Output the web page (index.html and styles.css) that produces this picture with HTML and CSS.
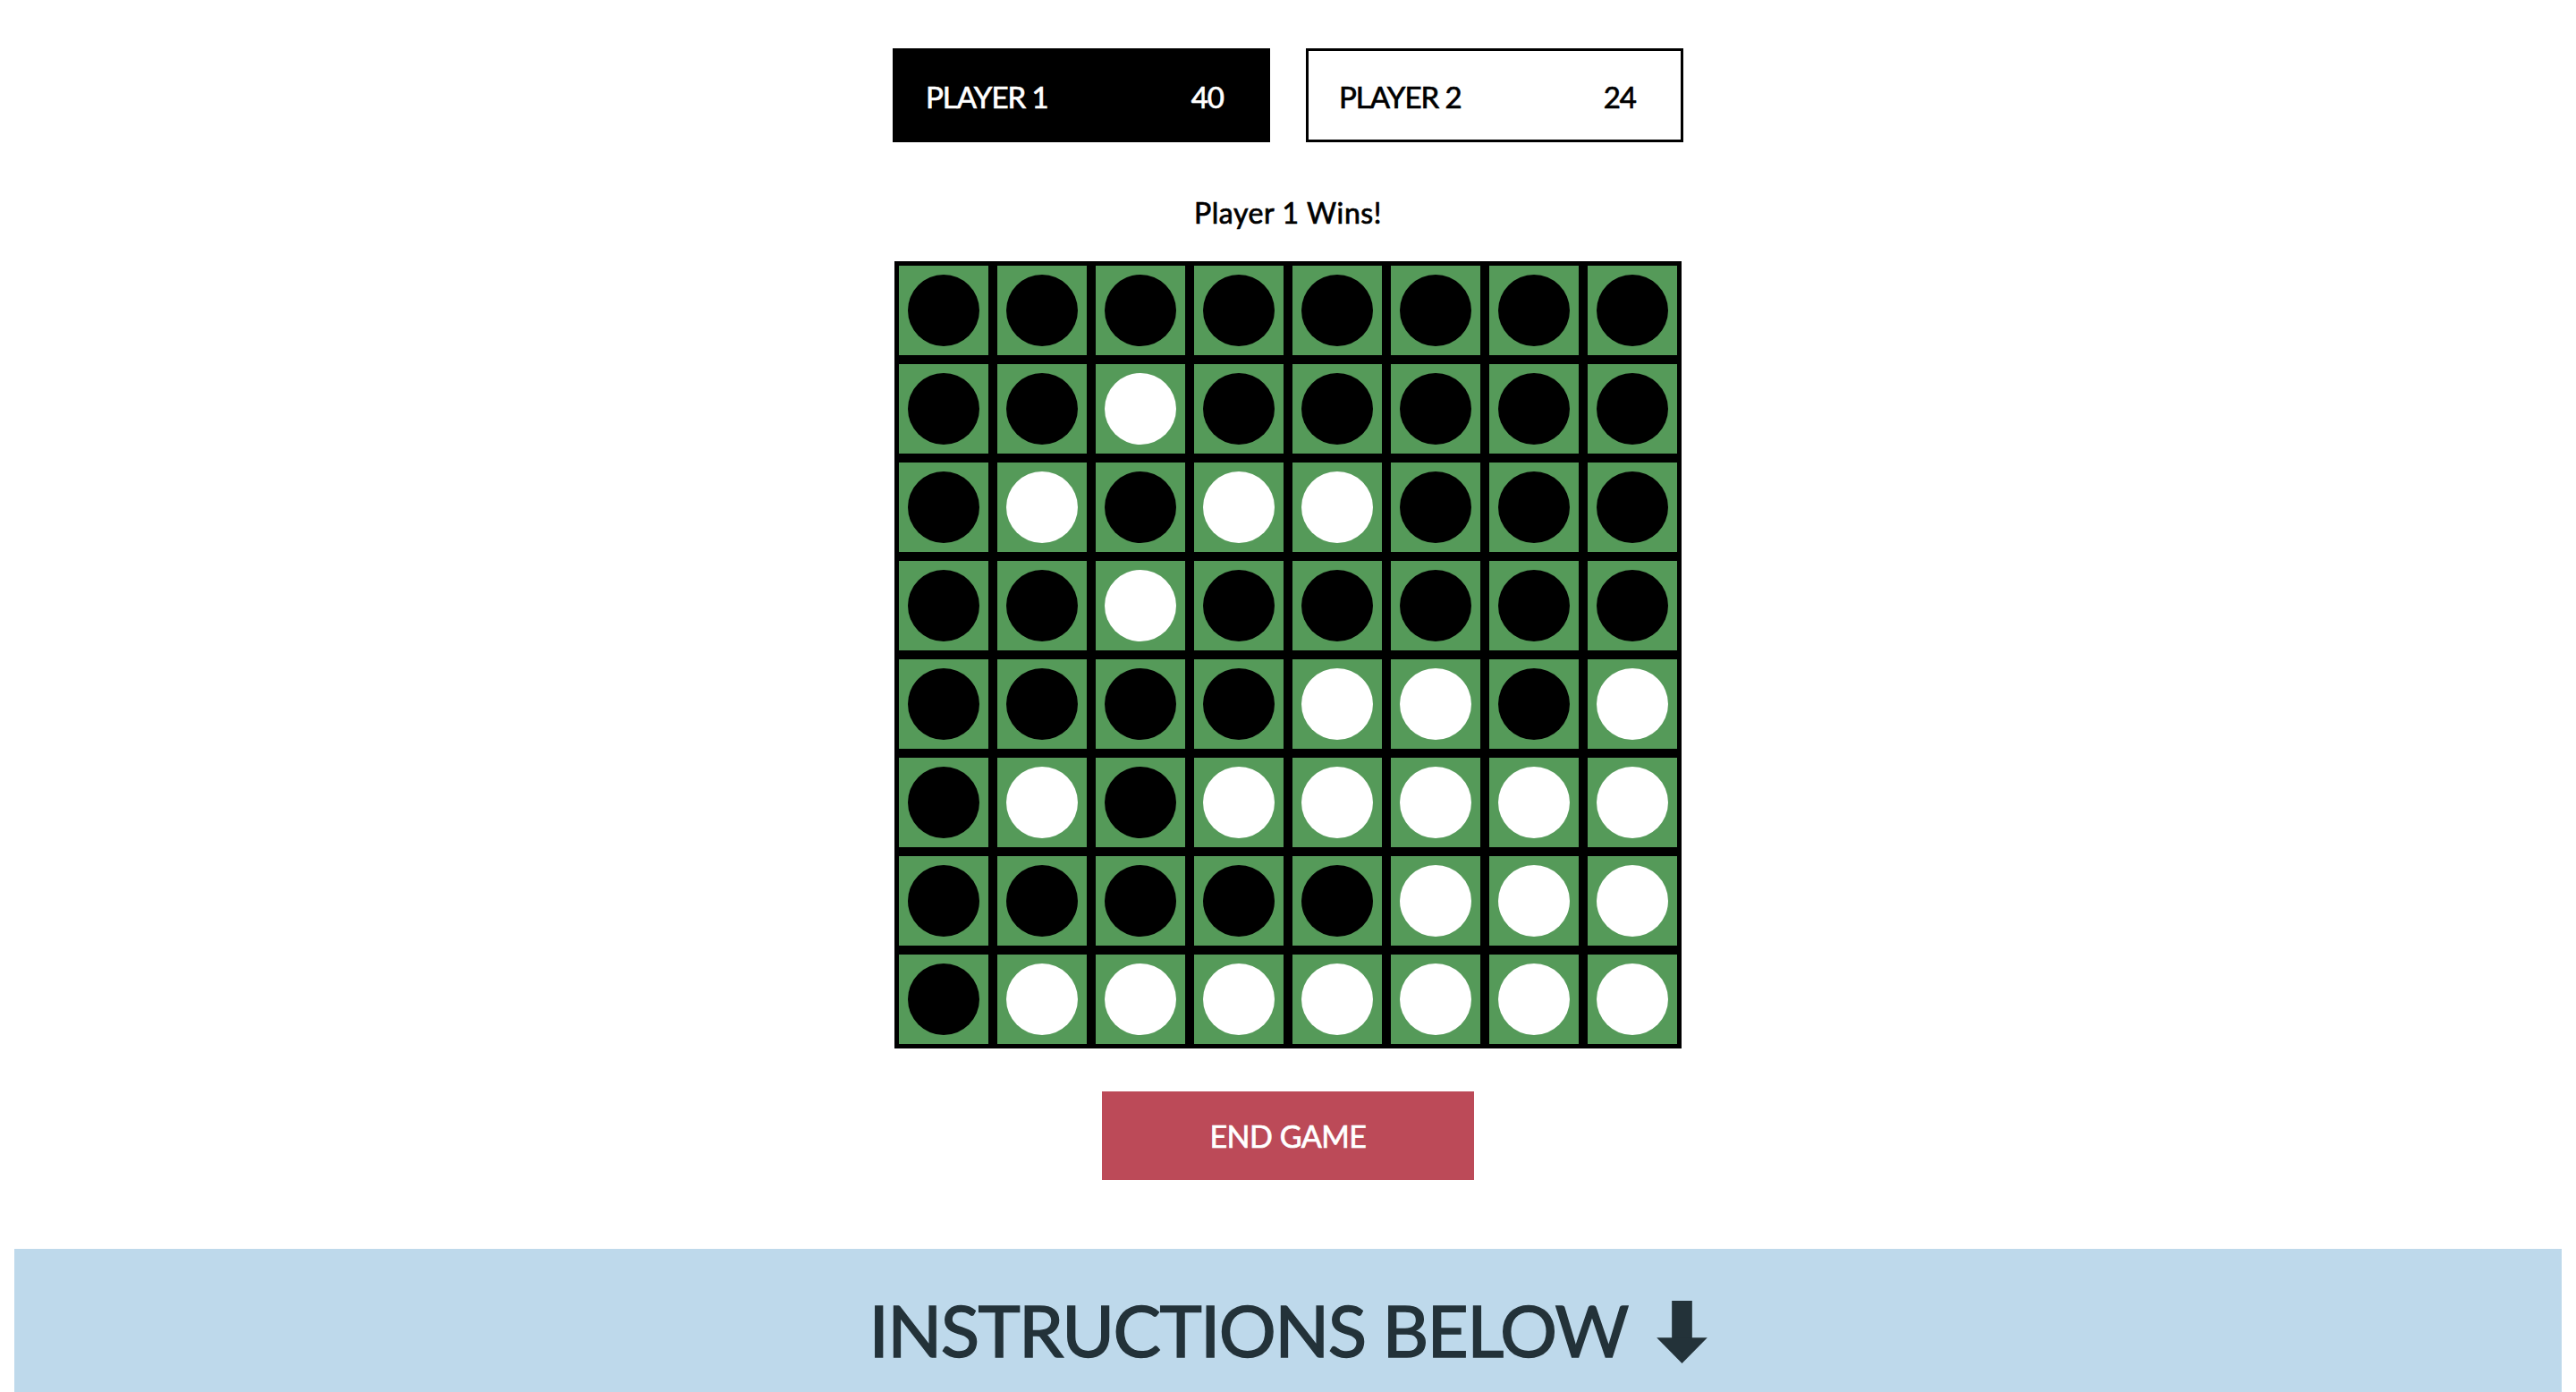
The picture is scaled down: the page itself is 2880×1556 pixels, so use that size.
FILE: index.html
```html
<!DOCTYPE html>
<html lang="en">
<head>
<meta charset="utf-8">
<title>Othello</title>
<link rel="stylesheet" href="styles.css">
</head>
<body>
<main class="game">
  <div class="scores">
    <div class="score active"><span>PLAYER 1</span><span>40</span></div>
    <div class="score idle"><span>PLAYER 2</span><span>24</span></div>
  </div>
  <p class="status">Player 1 Wins!</p>
  <div class="board">
    <div class="cell"><span class="disc black"></span></div><div class="cell"><span class="disc black"></span></div><div class="cell"><span class="disc black"></span></div><div class="cell"><span class="disc black"></span></div><div class="cell"><span class="disc black"></span></div><div class="cell"><span class="disc black"></span></div><div class="cell"><span class="disc black"></span></div><div class="cell"><span class="disc black"></span></div>
    <div class="cell"><span class="disc black"></span></div><div class="cell"><span class="disc black"></span></div><div class="cell"><span class="disc white"></span></div><div class="cell"><span class="disc black"></span></div><div class="cell"><span class="disc black"></span></div><div class="cell"><span class="disc black"></span></div><div class="cell"><span class="disc black"></span></div><div class="cell"><span class="disc black"></span></div>
    <div class="cell"><span class="disc black"></span></div><div class="cell"><span class="disc white"></span></div><div class="cell"><span class="disc black"></span></div><div class="cell"><span class="disc white"></span></div><div class="cell"><span class="disc white"></span></div><div class="cell"><span class="disc black"></span></div><div class="cell"><span class="disc black"></span></div><div class="cell"><span class="disc black"></span></div>
    <div class="cell"><span class="disc black"></span></div><div class="cell"><span class="disc black"></span></div><div class="cell"><span class="disc white"></span></div><div class="cell"><span class="disc black"></span></div><div class="cell"><span class="disc black"></span></div><div class="cell"><span class="disc black"></span></div><div class="cell"><span class="disc black"></span></div><div class="cell"><span class="disc black"></span></div>
    <div class="cell"><span class="disc black"></span></div><div class="cell"><span class="disc black"></span></div><div class="cell"><span class="disc black"></span></div><div class="cell"><span class="disc black"></span></div><div class="cell"><span class="disc white"></span></div><div class="cell"><span class="disc white"></span></div><div class="cell"><span class="disc black"></span></div><div class="cell"><span class="disc white"></span></div>
    <div class="cell"><span class="disc black"></span></div><div class="cell"><span class="disc white"></span></div><div class="cell"><span class="disc black"></span></div><div class="cell"><span class="disc white"></span></div><div class="cell"><span class="disc white"></span></div><div class="cell"><span class="disc white"></span></div><div class="cell"><span class="disc white"></span></div><div class="cell"><span class="disc white"></span></div>
    <div class="cell"><span class="disc black"></span></div><div class="cell"><span class="disc black"></span></div><div class="cell"><span class="disc black"></span></div><div class="cell"><span class="disc black"></span></div><div class="cell"><span class="disc black"></span></div><div class="cell"><span class="disc white"></span></div><div class="cell"><span class="disc white"></span></div><div class="cell"><span class="disc white"></span></div>
    <div class="cell"><span class="disc black"></span></div><div class="cell"><span class="disc white"></span></div><div class="cell"><span class="disc white"></span></div><div class="cell"><span class="disc white"></span></div><div class="cell"><span class="disc white"></span></div><div class="cell"><span class="disc white"></span></div><div class="cell"><span class="disc white"></span></div><div class="cell"><span class="disc white"></span></div>
  </div>
  <button class="end-btn" type="button">END GAME</button>
</main>
<section class="instructions">
  <h2 class="instructions-title">INSTRUCTIONS BELOW <svg class="arrow" viewBox="0 0 55 68" width="57" height="70" aria-hidden="true"><rect x="16.5" y="0" width="22" height="42" fill="currentColor"/><polygon points="0,40 55,40 27.5,68" fill="currentColor"/></svg></h2>
</section>
</body>
</html>
```
FILE: styles.css
```css
html, body {
  margin: 0;
  padding: 0;
  background: #ffffff;
}

body {
  font-family: Lato, "Open Sans", "Liberation Sans", sans-serif;
  color: #000;
}

.game {
  display: flex;
  flex-direction: column;
  align-items: center;
  padding-top: 54px;
}

.scores {
  display: flex;
  gap: 40px;
}

.score {
  box-sizing: border-box;
  width: 422px;
  height: 105px;
  display: flex;
  align-items: center;
  justify-content: space-between;
  padding: 3px 52px 0 37px;
  font-size: 33px;
  line-height: 1;
  letter-spacing: -1px;
  -webkit-text-stroke: 0.7px currentColor;
}

.score.active {
  background: #000;
  color: #fff;
}

.score.idle {
  border: 3px solid #000;
  padding: 3px 50px 0 34px;
}

.status {
  margin: 59px 0 34px;
  font-size: 32px;
  line-height: 40px;
  letter-spacing: 0.6px;
  -webkit-text-stroke: 0.7px currentColor;
}

.board {
  display: grid;
  grid-template-columns: repeat(8, 110px);
  grid-auto-rows: 110px;
}

.cell {
  box-sizing: border-box;
  border: 5px solid #000;
  background: #559a59;
  display: flex;
  align-items: center;
  justify-content: center;
}

.disc {
  width: 80px;
  height: 80px;
  border-radius: 50%;
}

.disc.black { background: #000; }
.disc.white { background: #fff; }

.end-btn {
  margin-top: 48px;
  width: 416px;
  height: 99px;
  border: 0;
  background: #bc4a58;
  color: #fff;
  font-family: inherit;
  font-size: 34px;
  letter-spacing: -0.5px;
  -webkit-text-stroke: 0.7px currentColor;
  padding: 0;
  cursor: pointer;
}

.instructions {
  margin: 77px 16px 0;
  background: #bed9eb;
  padding: 50px 0;
  text-align: center;
}

.instructions-title {
  margin: 0;
  font-size: 80px;
  font-weight: 400;
  line-height: 80px;
  letter-spacing: -1.6px;
  color: #233239;
  -webkit-text-stroke: 1.5px currentColor;
}

.arrow {
  vertical-align: -7px;
  margin-left: 14px;
}
```
